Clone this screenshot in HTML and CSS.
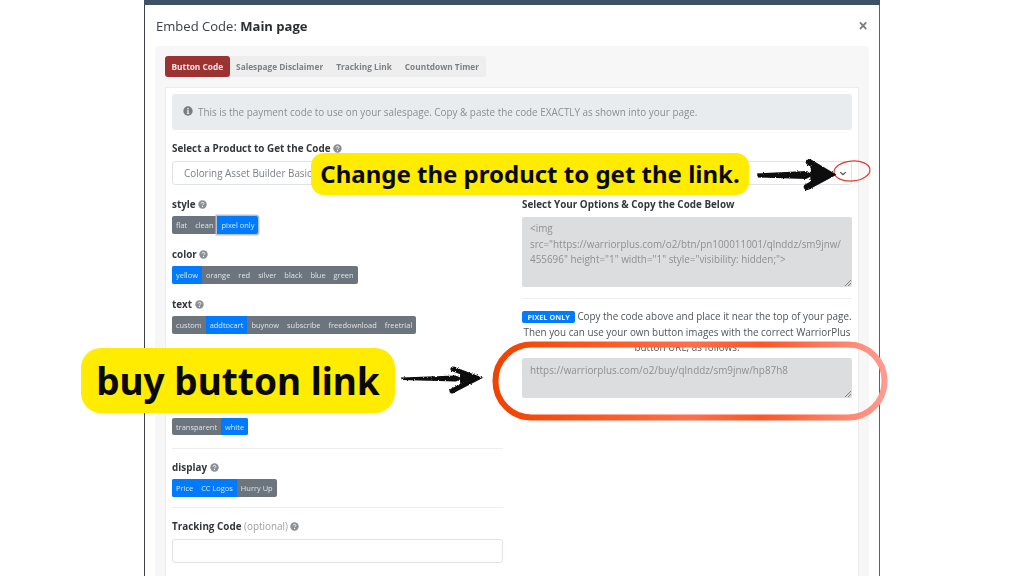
FILE: index.html
```html
<!DOCTYPE html>
<html lang="en">
<head>
<meta charset="utf-8">
<title>Embed Code</title>
<link rel="stylesheet" href="styles.css">
</head>
<body>
<svg class="defs" width="0" height="0" aria-hidden="true">
  <defs>
    <filter id="chalk" x="-10%" y="-30%" width="120%" height="160%">
      <feTurbulence type="fractalNoise" baseFrequency=".55" numOctaves="2" seed="4"/>
      <feDisplacementMap in="SourceGraphic" scale="2.6" xChannelSelector="R" yChannelSelector="G"/>
    </filter>
  </defs>
  <symbol id="q" viewBox="0 0 12 12">
    <circle cx="6" cy="6" r="5.6" fill="currentColor"/>
    <path d="M4.2 4.7c0-1 .8-1.600 1.800-1.600s1.800.6 1.800 1.500c0 1.300-1.800 1.300-1.800 2.500" fill="none" stroke="#fff" stroke-width="1.2"/>
    <rect x="5.3" y="8" width="1.4" height="1.4" fill="#fff"/>
  </symbol>
  <symbol id="i" viewBox="0 0 12 12">
    <circle cx="6" cy="6" r="5.6" fill="currentColor"/>
    <rect x="5.1" y="2.4" width="1.8" height="1.7" fill="#e9ecef"/>
    <path d="M4.500 5h2.400v3.600h.7v1H4.500v-1h.7V6h-.7z" fill="#e9ecef"/>
  </symbol>
</svg>
<div class="stage">
  <div class="modal">
    <div class="backdrop-strip"></div>
    <header class="modal-head">
      <h1 class="modal-title">Embed Code: <b>Main page</b></h1>
      <span class="close">×</span>
    </header>
    <section class="card">
      <nav class="tabs">
        <span class="tab tab-active">Button Code</span>
        <span class="tab">Salespage Disclaimer</span>
        <span class="tab">Tracking Link</span>
        <span class="tab">Countdown Timer</span>
      </nav>
      <div class="panel">
        <div class="alert"><svg class="ico-info"><use href="#i"/></svg>This is the payment code to use on your salespage. Copy &amp; paste the code EXACTLY as shown into your page.</div>
        <div class="field-label product-label">Select a Product to Get the Code <svg class="ico-q"><use href="#q"/></svg></div>
        <div class="select">
          <span>Coloring Asset Builder Basic</span>
          <svg class="chev" viewBox="0 0 10 6"><path d="M1.500 1.200 5 4.600l3.500-3.400" fill="none" stroke="#4a5158" stroke-width="1.500"/></svg>
        </div>
        <div class="cols">
          <div class="col col-left">
            <div class="opt">
              <div class="field-label">style <svg class="ico-q"><use href="#q"/></svg></div>
              <div class="group"><span class="b">flat</span><span class="b">clean</span><span class="b on focus">pixel only</span></div>
            </div>
            <div class="opt">
              <div class="field-label">color <svg class="ico-q"><use href="#q"/></svg></div>
              <div class="group"><span class="b on">yellow</span><span class="b">orange</span><span class="b">red</span><span class="b">silver</span><span class="b">black</span><span class="b">blue</span><span class="b">green</span></div>
            </div>
            <div class="opt">
              <div class="field-label">text <svg class="ico-q"><use href="#q"/></svg></div>
              <div class="group"><span class="b">custom</span><span class="b on">addtocart</span><span class="b">buynow</span><span class="b">subscribe</span><span class="b">freedownload</span><span class="b">freetrial</span></div>
            </div>
            <div class="opt-bg">
              <div class="group group-bg"><span class="b">transparent</span><span class="b on">white</span></div>
            </div>
            <hr class="rule">
            <div class="opt-display">
              <div class="field-label">display <svg class="ico-q"><use href="#q"/></svg></div>
              <div class="group"><span class="b on">Price</span><span class="b on">CC Logos</span><span class="b">Hurry Up</span></div>
            </div>
            <hr class="rule rule-tight">
            <div class="field-label tracking">Tracking Code <span class="muted">(optional)</span> <svg class="ico-q"><use href="#q"/></svg></div>
            <div class="input"></div>
          </div>
          <div class="col col-right">
            <div class="field-label">Select Your Options &amp; Copy the Code Below</div>
            <div class="code code-a">&lt;img<br>src="https://warriorplus.com/o2/btn/pn100011001/qlnddz/sm9jnw/<br>455696" height="1" width="1" style="visibility: hidden;"&gt;<svg class="grip" viewBox="0 0 6 6"><path d="M0 6 6 0M3 6l3-3" stroke="#666" stroke-width=".8"/></svg></div>
            <hr class="rule rule-right">
            <p class="note"><span class="badge">PIXEL ONLY</span> Copy the code above and place it near the top of your page. Then you can use your own button images with the correct WarriorPlus button URL, as follows:</p>
            <div class="code code-b">https://warriorplus.com/o2/buy/qlnddz/sm9jnw/hp87h8<svg class="grip" viewBox="0 0 6 6"><path d="M0 6 6 0M3 6l3-3" stroke="#666" stroke-width=".8"/></svg></div>
          </div>
        </div>
      </div>
    </section>
  </div>

  <svg class="ring" viewBox="0 0 396 80">
    <defs>
      <linearGradient id="ringGrad" gradientUnits="userSpaceOnUse" x1="0" y1="0" x2="396" y2="0">
        <stop offset="0" stop-color="#ee4200"/>
        <stop offset=".3" stop-color="#ff5a28"/>
        <stop offset=".5" stop-color="#ff6f4c"/>
        <stop offset=".68" stop-color="#ff5526"/>
        <stop offset="1" stop-color="#ff9d92"/>
      </linearGradient>
    </defs>
    <rect x="3.500" y="3.500" width="389" height="73" rx="36" fill="none" stroke="url(#ringGrad)" stroke-width="6"/>
  </svg>
  <svg class="red-ellipse" viewBox="0 0 40 24"><ellipse cx="20" cy="12" rx="18" ry="10" transform="rotate(-5 20 12)" fill="none" stroke="#e8392f" stroke-width="1.200"/></svg>

  <div class="callout callout-a">Change the product to get the link.</div>
  <div class="callout callout-b">buy button link</div>

  <svg class="arrow arrow-a" viewBox="0 0 86 32">
    <g filter="url(#chalk)" fill="#0a0a0a">
      <path d="M1 14.500 50 12l8 4-8 4-48-1.500z"/>
      <path d="M53 3 74 15.500 51 28" fill="none" stroke="#0a0a0a" stroke-width="6.500" stroke-linecap="round"/>
      <path d="M55 7 74 15.500 54 25z"/>
    </g>
  </svg>
  <svg class="arrow arrow-b" viewBox="0 0 86 32">
    <g filter="url(#chalk)" fill="#0a0a0a">
      <path d="M1 12.500 56 10.500l6 3-6 3-54-1.500z"/>
      <path d="M53 4 77 13 52 26" fill="none" stroke="#0a0a0a" stroke-width="5" stroke-linecap="round"/>
      <path d="M60 9 74 13 60 19z"/>
    </g>
  </svg>
</div>
</body>
</html>
```
FILE: styles.css
```css
* { box-sizing: border-box; }
html, body { margin: 0; padding: 0; background: #fff; }
.defs { position: absolute; }
.stage {
  position: relative;
  width: 1024px;
  height: 576px;
  overflow: hidden;
  display: flex;
  justify-content: center;
  font-family: "Open Sans", "Noto Sans", sans-serif;
  color: #333;
}
.modal {
  width: 736px;
  height: 576px;
  border-left: 1px solid #3d4045;
  border-right: 1px solid #5d6064;
  background: #fff;
  filter: blur(.45px);
  flex: none;
}
.backdrop-strip { height: 5px; margin: 0 -1px; background: #3e5166; }
.modal-head {
  height: 41px;
  padding: 0 11px;
  display: flex;
  align-items: center;
  justify-content: space-between;
}
.modal-title { margin: 0; font-size: 13.05px; font-weight: 400; color: #3c4043; }
.modal-title b { font-weight: 700; color: #2b2f33; }
.close { font-size: 17px; font-weight: 700; color: #7b7f83; line-height: 1; }
.card {
  margin: 0 10px;
  height: 540px;
  padding: 10px;
  background: #f7f7f7;
  border-radius: 4px;
}
.tabs {
  display: flex;
  width: fit-content;
  height: 21px;
  background: #eeeeee;
  border-radius: 3px;
  font-size: 8.3px;
  font-weight: 700;
  color: #7c8186;
}
.tab { padding: 0 6.5px; display: flex; align-items: center; }
.tab-active { background: #9c3232; color: #f4e6e6; border-radius: 3px; }
.panel {
  margin-top: 10px;
  height: 500px;
  padding: 6px;
  background: #fff;
  border: 1px solid #ececec;
}
.alert {
  height: 36px;
  padding: 0 11px;
  display: flex;
  align-items: center;
  background: #e9ecef;
  border-radius: 3px;
  font-size: 9.9px;
  color: #8b8f93;
}
.ico-info { width: 10px; height: 10px; margin: -3px 5px 0 0; color: #777c80; flex: none; }
.ico-q { width: 9px; height: 9px; color: #8a8f94; vertical-align: -1px; }
.field-label { font-size: 9.9px; font-weight: 700; color: #33373b; line-height: 14px; }
.product-label { margin-top: 11px; }
.select {
  margin-top: 6px;
  height: 24px;
  padding: 0 3px 0 11px;
  display: flex;
  align-items: center;
  justify-content: space-between;
  background: #fff;
  border: 1px solid #dfe3e8;
  border-radius: 3px;
  font-size: 9.9px;
  color: #7b8086;
}
.chev { width: 8px; height: 5px; margin-right: 1px; }
.cols { display: flex; gap: 19px; margin-top: 12px; }
.col-left { width: 331px; flex: none; }
.col-right { flex: 1; }
.opt { margin-bottom: 13px; }
.field-label + .group { margin-top: 5px; }
.group {
  display: flex;
  width: fit-content;
  height: 18px;
  border-radius: 2px;
  background: #6c757d;
  font-size: 7.45px;
  color: #dfe2e5;
}
.group-bg { height: 17px; }
.b { padding: 0 4px; display: flex; align-items: center; }
.b:first-child { border-radius: 2px 0 0 2px; }
.b:last-child { border-radius: 0 2px 2px 0; }
.on { background: #007bff; color: #d8e9ff; }
.focus { box-shadow: 0 0 0 1.5px #b9c0c7; }
.opt-bg { margin-top: 84px; }
.rule { margin: 13px 0 0; border: 0; border-top: 1px solid #eeeeee; }
.rule-tight { margin-top: 10px; }
.opt-display { margin-top: 11px; }
.tracking { margin-top: 11px; }
.muted { font-weight: 400; color: #9a9ea2; }
.input {
  margin-top: 6px;
  height: 24px;
  border: 1px solid #dfe3e8;
  border-radius: 3px;
  background: #fff;
}
.code {
  position: relative;
  margin-top: 6px;
  padding: 4px 8px;
  background: #dcddde;
  border-radius: 2px;
  font-size: 9.9px;
  line-height: 15.5px;
  color: #8d9093;
}
.code-a { height: 70px; }
.code-b { height: 40px; margin-top: 2px; padding-top: 5px; }
.grip { position: absolute; right: 1px; bottom: 1px; width: 6px; height: 6px; }
.rule-right { margin-top: 11px; }
.note {
  margin: 10px 0 0;
  font-size: 9.9px;
  line-height: 15.5px;
  color: #50555a;
  text-align: center;
}
.badge {
  display: inline-block;
  padding: 0 5px;
  height: 12px;
  line-height: 12px;
  background: #007bff;
  border-radius: 2px;
  font-size: 7.3px;
  font-weight: 700;
  color: #e6f1ff;
}
.callout {
  position: absolute;
  display: flex;
  align-items: center;
  justify-content: center;
  background: #ffec00;
  color: #0a0a0a;
  font-family: "Noto Sans", sans-serif;
  font-weight: 700;
  white-space: nowrap;
}
.callout-a { left: 311px; top: 153px; width: 438px; height: 42px; padding-bottom: 2px; border-radius: 13px; font-size: 24px; }
.callout-b { left: 81px; top: 348px; width: 314px; height: 65px; border-radius: 20px; font-size: 37px; }
.ring { position: absolute; left: 492px; top: 341px; width: 396px; height: 80px; }
.red-ellipse { position: absolute; left: 832px; top: 159px; width: 40px; height: 24px; }
.arrow { position: absolute; width: 86px; height: 32px; }
.arrow-a { left: 756px; top: 159px; }
.arrow-b { left: 400px; top: 365px; }
```
